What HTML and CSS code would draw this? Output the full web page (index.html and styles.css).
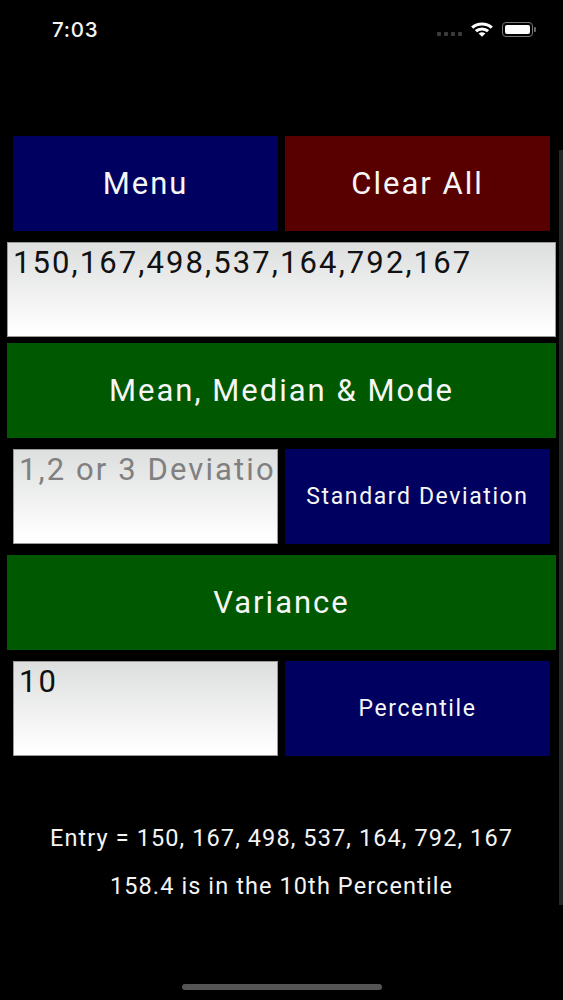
FILE: index.html
```html
<!DOCTYPE html>
<html lang="en">

<head>
    <meta charset="UTF-8">
    <title>Statistics</title>
    <link rel="stylesheet" href="styles.css">
</head>

<body>
    <div class="status-bar">
        <span class="clock">7:03</span>
        <div class="status-icons">
            <div class="signal"><i></i><i></i><i></i><i></i></div>
            <svg class="wifi" width="24" height="16" viewBox="0 0 22 16" preserveAspectRatio="none">
                <path d="M1 5.6A14.5 14.5 0 0 1 21 5.6L19 7.7A11.6 11.6 0 0 0 3 7.7Z" fill="#fff"/>
                <path d="M4.4 9.1A9.6 9.6 0 0 1 17.6 9.1L15.6 11.2A6.8 6.8 0 0 0 6.4 11.2Z" fill="#fff"/>
                <path d="M7.9 12.6A4.7 4.7 0 0 1 14.1 12.6L11 15.8Z" fill="#fff"/>
            </svg>
            <div class="battery"><div class="battery-level"></div></div>
            <div class="battery-cap"></div>
        </div>
    </div>

    <div class="scrollbar"></div>

    <div class="content">
        <div class="row">
            <button class="btn navy big">Menu</button>
            <button class="btn maroon big">Clear All</button>
        </div>
        <div class="field first-field">150,167,498,537,164,792,167</div>
        <button class="btn green big after-field">Mean, Median &amp; Mode</button>
        <div class="row">
            <div class="field"><span class="placeholder">1,2 or 3 Deviations</span></div>
            <button class="btn navy small">Standard Deviation</button>
        </div>
        <button class="btn green big">Variance</button>
        <div class="row">
            <div class="field">10</div>
            <button class="btn navy small">Percentile</button>
        </div>
        <div class="results">
            <p>Entry = 150, 167, 498, 537, 164, 792, 167</p>
            <p>158.4 is in the 10th Percentile</p>
        </div>
    </div>

    <div class="home-bar"></div>
</body>

</html>
```

FILE: styles.css
```css
* {
    box-sizing: border-box;
}

html,
body {
    margin: 0;
    height: 1000px;
    overflow: hidden;
}

body {
    position: relative;
    background-color: #000;
    color: #fff;
    font-family: Roboto, sans-serif;
}

/* status bar */
.status-bar {
    display: flex;
    justify-content: space-between;
    align-items: center;
    height: 58px;
    padding: 0 27px 0 52px;
}

.clock {
    font-family: Inter, "Liberation Sans", sans-serif;
    font-size: 20.5px;
    font-weight: 500;
    letter-spacing: 0.8px;
    color: #f4f4f4;
}

.status-icons {
    display: flex;
    align-items: center;
}

.signal {
    display: flex;
    gap: 3px;
    margin: 10px 8px 0 0;
}

.signal i {
    width: 4px;
    height: 4px;
    border-radius: 1px;
    background-color: #3c3c3c;
}

.wifi {
    margin-right: 8px;
}

.battery {
    width: 31px;
    height: 15px;
    padding: 2px;
    border: 1px solid #777;
    border-radius: 4px;
}

.battery-level {
    height: 100%;
    border-radius: 2px;
    background-color: #fff;
}

.battery-cap {
    width: 2px;
    height: 5px;
    margin-left: 1px;
    border-radius: 0 1px 1px 0;
    background-color: #666;
}

/* calculator */
.content {
    display: flex;
    flex-direction: column;
    gap: 11px;
    padding: 78px 7px 0;
}

.row {
    display: grid;
    grid-template-columns: 1fr 1fr;
    gap: 7px;
    padding: 0 6px;
}

.btn {
    height: 95px;
    padding: 0;
    border: 0;
    color: #f6f6f6;
    font-family: Roboto, sans-serif;
}

.navy {
    background-color: #000060;
}

.maroon {
    background-color: #580000;
}

.green {
    background-color: #005800;
}

.big {
    font-size: 31px;
    letter-spacing: 2px;
}

.small {
    font-size: 23px;
    letter-spacing: 1.6px;
}

.field {
    height: 95px;
    padding: 1px 4px 1px 5px;
    white-space: nowrap;
    overflow: hidden;
    border: 1px solid #9a9a9a;
    background: linear-gradient(#dddede, #ffffff 95%);
    color: #111;
    font-size: 31px;
    letter-spacing: 2.1px;
    line-height: 38px;
}

.placeholder {
    display: block;
    overflow: hidden;
    color: #808080;
}

.after-field {
    margin-top: -5px;
}

.results {
    margin-top: 58px;
    font-size: 23.5px;
    letter-spacing: 1.1px;
    text-align: center;
    color: #f4f4f4;
}

.results p {
    margin: 0 0 22px;
    line-height: 26px;
}

/* overlays */
.scrollbar {
    position: absolute;
    top: 150px;
    right: 0;
    width: 4px;
    height: 755px;
    background-color: #262626;
}

.home-bar {
    position: absolute;
    left: 182px;
    top: 984px;
    width: 200px;
    height: 6px;
    border-radius: 3px;
    background-color: #555;
}
```
